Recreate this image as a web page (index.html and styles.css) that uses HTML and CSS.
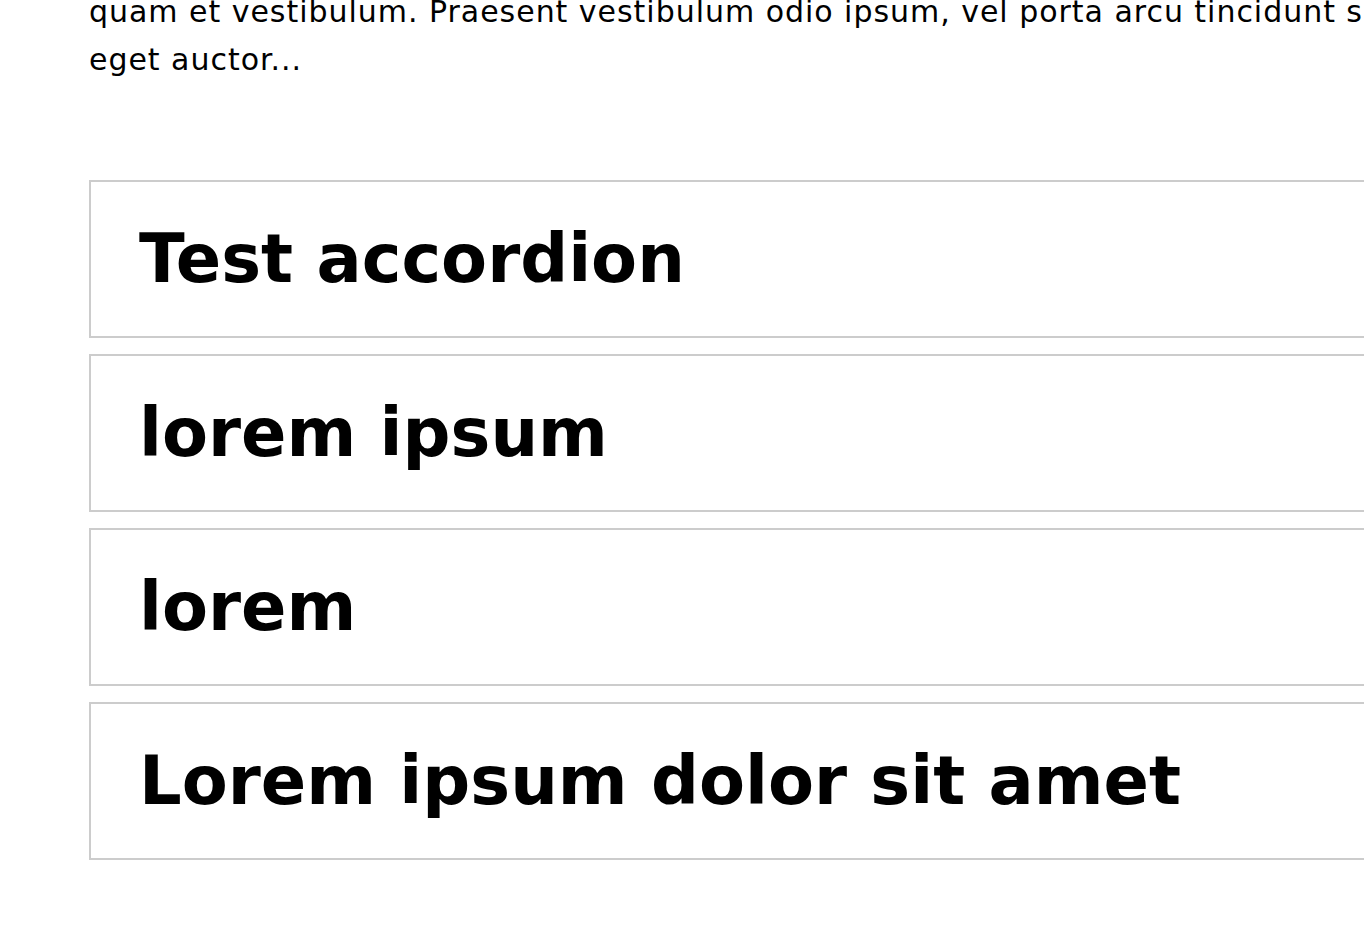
FILE: index.html
```html
<!DOCTYPE html>
<html lang="en">
<head>
    <meta charset="UTF-8">
    <meta name="viewport" content="width=device-width, initial-scale=1.0">
    <title>Test accordion</title>
    <link rel="stylesheet" href="styles.css">
</head>
<body>
    <div class="content">
        <!-- Intro text (page is scrolled, first lines are above the fold) -->
        <p class="intro">quam et vestibulum. Praesent vestibulum odio ipsum, vel porta arcu tincidunt sed<br>eget auctor...</p>

        <!-- Accordion -->
        <div class="accordion">
            <div class="accordion-item">
                <h2 class="accordion-title">Test accordion</h2>
            </div>
            <div class="accordion-item">
                <h2 class="accordion-title">lorem ipsum</h2>
            </div>
            <div class="accordion-item">
                <h2 class="accordion-title">lorem</h2>
            </div>
            <div class="accordion-item">
                <h2 class="accordion-title">Lorem ipsum dolor sit amet</h2>
            </div>
        </div>
    </div>
</body>
</html>
```
FILE: styles.css
```css
html,
body {
    overflow: hidden;
}
body {
    margin: 0;
    font-family: "DejaVu Sans", sans-serif;
    color: #000;
    background: #fff;
}
.content {
    width: 1420px;
    padding-left: 89px;
}
.intro {
    margin: -12px 0 96px 0;
    font-size: 30px;
    line-height: 48px;
    letter-spacing: 0.97px;
    white-space: nowrap;
}
.accordion-item {
    display: flex;
    align-items: center;
    height: 154px;
    border: 2px solid #cccccc;
    padding: 0 48px;
    margin-bottom: 16px;
}
.accordion-title {
    margin: 0;
    font-size: 67px;
    font-weight: 700;
    line-height: 1;
}
```
